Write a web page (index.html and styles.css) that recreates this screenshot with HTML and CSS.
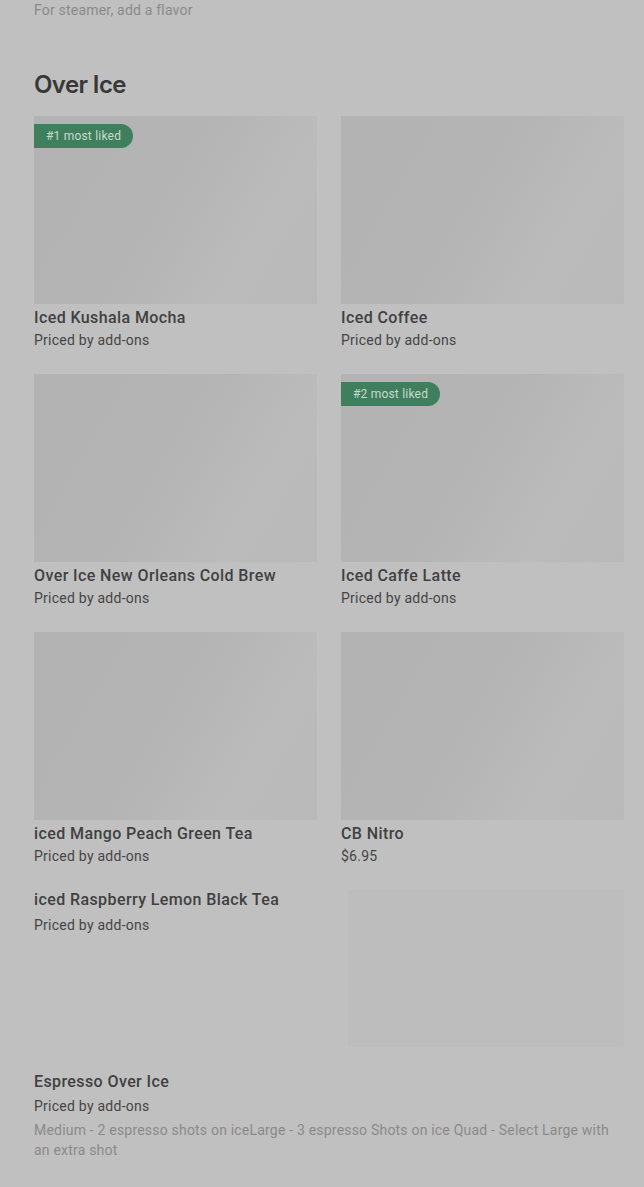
FILE: index.html
```html
<!DOCTYPE html>
<html lang="en">
<head>
<meta charset="utf-8">
<title>Over Ice</title>
<link rel="stylesheet" href="styles.css">
</head>
<body>
<main class="page">
  <p class="note">For steamer, add a flavor</p>

  <h2 class="section-title">Over Ice</h2>

  <div class="grid">
    <div class="card">
      <div class="thumb"><span class="badge">#1 most liked</span></div>
      <div class="name">Iced Kushala Mocha</div>
      <div class="price">Priced by add-ons</div>
    </div>
    <div class="card">
      <div class="thumb"></div>
      <div class="name">Iced Coffee</div>
      <div class="price">Priced by add-ons</div>
    </div>
    <div class="card">
      <div class="thumb"></div>
      <div class="name">Over Ice New Orleans Cold Brew</div>
      <div class="price">Priced by add-ons</div>
    </div>
    <div class="card">
      <div class="thumb"><span class="badge">#2 most liked</span></div>
      <div class="name">Iced Caffe Latte</div>
      <div class="price">Priced by add-ons</div>
    </div>
    <div class="card">
      <div class="thumb"></div>
      <div class="name">iced Mango Peach Green Tea</div>
      <div class="price">Priced by add-ons</div>
    </div>
    <div class="card">
      <div class="thumb"></div>
      <div class="name">CB Nitro</div>
      <div class="price">$6.95</div>
    </div>
  </div>

  <div class="row-item">
    <div class="row-text">
      <div class="name">iced Raspberry Lemon Black Tea</div>
      <div class="price price-gap">Priced by add-ons</div>
    </div>
    <div class="row-thumb"></div>
  </div>

  <div class="row-item single">
    <div class="row-text">
      <div class="name">Espresso Over Ice</div>
      <div class="price price-gap-sm">Priced by add-ons</div>
      <div class="desc">Medium - 2 espresso shots on iceLarge - 3 espresso Shots on ice Quad - Select Large with an extra shot</div>
    </div>
  </div>
</main>
</body>
</html>
```

FILE: styles.css
```css
html, body {
  margin: 0;
  padding: 0;
  background: #c0c0c0;
}

body {
  font-family: Roboto, "Liberation Sans", Arial, sans-serif;
  color: #3a3a3a;
}

.page {
  padding: 0 20px 40px 34px;
}

.note {
  margin: 0;
  font-size: 14px;
  line-height: 20px;
  letter-spacing: 0.2px;
  color: #8a8a8a;
}

.section-title {
  margin: 49px 0 0;
  font-family: Inter, Roboto, sans-serif;
  font-size: 24px;
  font-weight: 600;
  line-height: 32px;
  letter-spacing: -0.6px;
  color: #383838;
}

.grid {
  margin-top: 15px;
  display: grid;
  grid-template-columns: 1fr 1fr;
  column-gap: 24px;
  row-gap: 24px;
}

.thumb {
  position: relative;
  height: 188px;
  background: linear-gradient(120deg, #b3b3b3 0%, #b4b4b4 45%, #bbbbbb 75%, #b9b9b9 100%);
}

.badge {
  position: absolute;
  top: 8px;
  left: 0;
  height: 24px;
  padding: 0 12px;
  border-radius: 0 12px 12px 0;
  background: #3f7f5e;
  color: #c6dbcd;
  font-size: 12px;
  line-height: 24px;
  letter-spacing: 0.2px;
  white-space: nowrap;
}

.name {
  margin-top: 4px;
  font-size: 16px;
  font-weight: 500;
  line-height: 20px;
  letter-spacing: 0.4px;
  color: #404040;
}

.price {
  margin-top: 2px;
  font-size: 14px;
  line-height: 20px;
  letter-spacing: 0.25px;
  color: #454545;
}

.price-gap {
  margin-top: 5px;
}

.price-gap-sm {
  margin-top: 4px;
}

.row-item {
  margin-top: 24px;
  display: grid;
  grid-template-columns: 1fr 276px;
  column-gap: 24px;
}

.row-item .name {
  margin-top: 0;
}

.row-thumb {
  height: 157px;
  background: #bdbdbd;
  border-radius: 2px;
}

.row-item.single {
  grid-template-columns: 1fr;
  margin-top: 25px;
}

.desc {
  margin-top: 4px;
  font-size: 14px;
  line-height: 20px;
  letter-spacing: 0.2px;
  color: #8a8a8a;
}
```
